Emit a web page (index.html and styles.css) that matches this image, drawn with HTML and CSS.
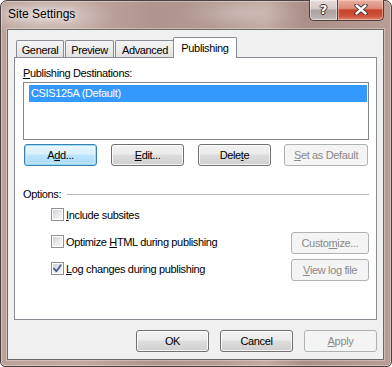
FILE: index.html
```html
<!DOCTYPE html>
<html>
<head>
<meta charset="utf-8">
<title>Site Settings</title>
<link rel="stylesheet" href="styles.css">
</head>
<body>
<div class="window">
  <div class="titlebar">
    <span class="title">Site Settings</span>
    <div class="caps">
      <div class="cap help"><span>?</span></div>
      <div class="cap close">
        <svg width="14" height="11" viewBox="0 0 14 11">
          <path d="M2.5 1.5 L11.5 9.5 M11.5 1.5 L2.5 9.5" stroke="#3b2a26" stroke-width="4.2" stroke-linecap="round" fill="none"/>
          <path d="M2.5 1.5 L11.5 9.5 M11.5 1.5 L2.5 9.5" stroke="#ffffff" stroke-width="2.4" stroke-linecap="round" fill="none"/>
        </svg>
      </div>
    </div>
  </div>
  <div class="client">
    <div class="tabs">
      <div class="tab t-general">General</div>
      <div class="tab t-preview">Preview</div>
      <div class="tab t-advanced">Advanced</div>
      <div class="tab t-publishing active">Publishing</div>
    </div>
    <div class="panel">
      <div class="label"><u>P</u>ublishing Destinations:</div>
      <div class="listbox">
        <div class="item">CSIS125A (Default)</div>
      </div>
      <div class="btnrow">
        <div class="btn default">A<u>d</u>d...</div>
        <div class="btn"><u>E</u>dit...</div>
        <div class="btn">Dele<u>t</u>e</div>
        <div class="btn disabled wide"><u>S</u>et as Default</div>
      </div>
      <div class="group-head">
        <span>Options:</span>
        <span class="group-line"></span>
      </div>
      <div class="opt-row">
        <span class="check"></span>
        <span><u>I</u>nclude subsites</span>
      </div>
      <div class="opt-row">
        <span class="check"></span>
        <span>Optimize <u>H</u>TML during publishing</span>
        <div class="btn disabled side">Custo<u>m</u>ize...</div>
      </div>
      <div class="opt-row">
        <span class="check checked">
          <svg width="11" height="11" viewBox="0 0 11 11">
            <path d="M2 5.6 L4.4 8.2 L8.8 2.2" stroke="#4a5e94" stroke-width="1.9" fill="none" stroke-linecap="round" stroke-linejoin="round"/>
          </svg>
        </span>
        <span><u>L</u>og changes during publishing</span>
        <div class="btn disabled side"><u>V</u>iew log file</div>
      </div>
    </div>
    <div class="footer">
      <div class="btn">OK</div>
      <div class="btn">Cancel</div>
      <div class="btn disabled"><u>A</u>pply</div>
    </div>
  </div>
</div>
</body>
</html>
```

FILE: styles.css
```css
* {
  box-sizing: border-box;
}

html, body {
  margin: 0;
  padding: 0;
}

body {
  width: 392px;
  height: 367px;
  overflow: hidden;
  background: #ffffff;
  font-family: "Liberation Sans", Arial, sans-serif;
  font-size: 11px;
  letter-spacing: -0.35px;
  color: #000000;
}

u {
  text-decoration: underline;
  text-decoration-thickness: 1px;
  text-underline-offset: 1px;
}

.window {
  width: 392px;
  height: 367px;
  border: 1px solid #4a4140;
  border-radius: 7px 7px 5px 5px;
  padding: 0 7px 6px 6px;
  display: flex;
  flex-direction: column;
  background:
    radial-gradient(ellipse 70px 20px at 45px 15px, rgba(255, 255, 255, 0.45), rgba(255, 255, 255, 0) 100%),
    radial-gradient(ellipse 60px 16px at 240px 12px, rgba(255, 255, 255, 0.22), rgba(255, 255, 255, 0) 100%),
    linear-gradient(90deg, #bba19a 0%, #c2a8a1 20%, #ae948c 40%, #b59b94 55%, #c3aaa3 68%, #a98f88 78%, #b89e97 100%);
  box-shadow: inset 0 0 0 1px rgba(255, 255, 255, 0.35);
}

.titlebar {
  flex: none;
  height: 28px;
  display: flex;
  justify-content: space-between;
  align-items: flex-start;
}

.title {
  font-size: 12px;
  line-height: 15px;
  letter-spacing: 0;
  margin: 6px 0 0 1px;
  text-shadow: 0 0 6px rgba(255, 255, 255, 0.95), 0 0 12px rgba(255, 255, 255, 0.7);
}

.caps {
  display: flex;
  height: 21px;
  margin-top: -1px;
}

.cap {
  height: 21px;
  border: 1px solid #4e3f3b;
  border-top: 0;
  display: flex;
  align-items: center;
  justify-content: center;
}

.help {
  width: 28px;
  border-right: 0;
  border-radius: 0 0 0 5px;
  background: linear-gradient(#e6dedc 0%, #d3c8c5 45%, #aaa09d 50%, #b7adaa 85%, #c9c0bd 100%);
  box-shadow: inset 0 0 0 1px rgba(255, 255, 255, 0.45);
}

.help span {
  font-family: "DejaVu Sans", sans-serif;
  font-weight: bold;
  font-size: 13px;
  line-height: 13px;
  color: #ffffff;
  letter-spacing: 0;
  margin-top: -1px;
  text-shadow: 1px 0 0 #3b302d, -1px 0 0 #3b302d, 0 1px 0 #3b302d, 0 -1px 0 #3b302d;
}

.close {
  width: 47px;
  border-radius: 0 0 5px 0;
  background: linear-gradient(#eab0a2 0%, #dc8b7a 42%, #c8432a 50%, #cc5239 80%, #e0866f 100%);
  box-shadow: inset 0 0 0 1px rgba(255, 220, 210, 0.45);
}

.close svg {
  display: block;
  margin-top: -1px;
}

.client {
  flex: 1;
  border: 1px solid #6e6867;
  background: #f0f0f0;
  padding: 7px 6px 7px 6px;
  display: flex;
  flex-direction: column;
  box-shadow: 0 0 0 1px rgba(255, 255, 255, 0.3);
}

.tabs {
  flex: none;
  height: 20px;
  display: flex;
  align-items: flex-end;
  padding-left: 2px;
}

.tab {
  position: relative;
  height: 17px;
  border: 1px solid #898c95;
  border-bottom: 0;
  border-radius: 2px 2px 0 0;
  display: flex;
  align-items: center;
  justify-content: center;
  padding-top: 1px;
  background: linear-gradient(#f4f4f4 0%, #ececec 50%, #e1e1e1 100%);
  margin-right: 1px;
}

.t-general { width: 48px; }
.t-preview { width: 49px; }
.t-advanced { width: 60px; margin-right: 0; }

.tab.active {
  width: 64px;
  height: 21px;
  margin-left: -2px;
  margin-bottom: -1px;
  margin-right: 0;
  padding-top: 0;
  padding-bottom: 1px;
  background: #ffffff;
  z-index: 2;
}

.panel {
  flex: none;
  height: 263px;
  border: 1px solid #898c95;
  background: #ffffff;
  padding: 0 7px 0 8px;
  display: flex;
  flex-direction: column;
}

.label {
  margin-top: 9px;
  line-height: 13px;
}

.listbox {
  margin-top: 2px;
  height: 58px;
  border: 1px solid #828790;
  padding: 1px 1px 0 5px;
  flex: none;
}

.item {
  margin-top: 1px;
  height: 17px;
  line-height: 17px;
  background: #3399ff;
  color: #ffffff;
  padding-left: 2px;
}

.btnrow {
  margin-top: 4px;
  display: flex;
  height: 22px;
  padding-left: 1px;
  gap: 14px;
  flex: none;
}

.btnrow .btn.wide {
  width: 84px;
  margin-left: -1px;
}

.btn {
  width: 73px;
  height: 22px;
  flex: none;
  border: 1px solid #707070;
  border-radius: 3px;
  background: linear-gradient(#f2f2f2 0%, #ebebeb 45%, #dddddd 50%, #cfcfcf 100%);
  box-shadow: inset 0 0 0 1px rgba(255, 255, 255, 0.8);
  display: flex;
  align-items: center;
  justify-content: center;
  white-space: nowrap;
}

.btn.default {
  border-color: #3c7fb1;
  background: linear-gradient(#eaf6fd 0%, #d9f0fc 45%, #bee6fd 50%, #a7d9f5 100%);
  box-shadow: inset 0 0 0 1px rgba(120, 215, 250, 0.75), inset 0 0 2px 2px rgba(255, 255, 255, 0.35);
}

.btn.disabled {
  border-color: #adb2b5;
  background: #f4f4f4;
  box-shadow: none;
  color: #8a8a8a;
}

.group-head {
  margin-top: 22px;
  height: 13px;
  line-height: 13px;
  display: flex;
  align-items: center;
  flex: none;
}

.group-line {
  flex: 1;
  height: 1px;
  margin-left: 6px;
  background: #b4b9bd;
}

.opt-row {
  height: 27px;
  display: flex;
  align-items: center;
  padding-left: 28px;
  flex: none;
}

.check {
  width: 13px;
  height: 13px;
  flex: none;
  margin-right: 2px;
  border: 1px solid #8f8f8f;
  padding: 1px;
  background: linear-gradient(135deg, #cdd1d6 0%, #e6e8ea 50%, #f8f8f8 100%) content-box, #ffffff;
  display: flex;
  align-items: center;
  justify-content: center;
}

.check svg {
  display: block;
  margin: -1px;
}

.btn.side {
  width: 78px;
  margin-left: auto;
  align-self: flex-end;
  margin-bottom: 1px;
}

.footer {
  margin-top: 10px;
  display: flex;
  justify-content: flex-end;
  gap: 11px;
  flex: none;
}
```
